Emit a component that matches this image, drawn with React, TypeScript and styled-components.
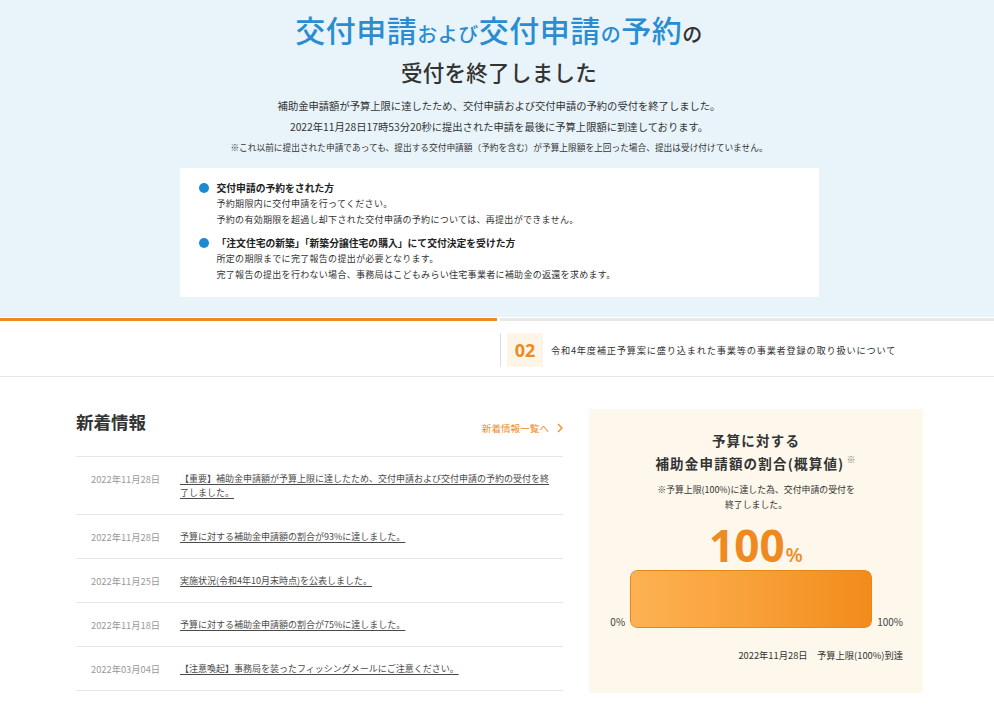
import React from "react";
import styled, { createGlobalStyle } from "styled-components";

const GlobalStyle = createGlobalStyle`
  html, body {
    margin: 0;
    padding: 0;
    background: #fff;
    font-family: "Noto Sans CJK JP", "Noto Sans", sans-serif;
    color: #333;
  }
`;

const ORANGE = "#ee8a1f";
const BLUE = "#2a8dd2";
const LINE = "#e6e6e6";

/* ---------- hero ---------- */

const Hero = styled.section`
  background: #e8f4f9;
  padding: 9px 0 20px 4px;
  display: flex;
  flex-direction: column;
  align-items: center;
`;

const HeroTitle = styled.h1`
  margin: 0;
  font-size: 30px;
  line-height: 40px;
  font-weight: 500;
  color: ${BLUE};
  letter-spacing: 0.5px;
`;

const Small = styled.span<{ $dark?: boolean }>`
  font-size: 20px;
  color: ${({ $dark }) => ($dark ? "#333" : BLUE)};
`;

const HeroSub = styled.h2`
  margin: 2px 0 0;
  font-size: 21.5px;
  line-height: 31px;
  font-weight: 500;
  color: #333;
  letter-spacing: 0.3px;
`;

const HeroText = styled.p<{ $note?: boolean }>`
  margin: 0;
  font-size: ${({ $note }) => ($note ? "8.7px" : "10.3px")};
  line-height: ${({ $note }) => ($note ? "22px" : "21px")};
  color: #333;
  text-align: center;
`;

const HeroLead = styled.div`
  margin-top: 8px;
  display: flex;
  flex-direction: column;
  align-items: center;
`;

const NoticeBox = styled.div`
  margin-top: 9px;
  width: 639px;
  box-sizing: border-box;
  background: #fff;
  padding: 12px 20px 14px 19px;
  display: flex;
  flex-direction: column;
  gap: 7px;
`;

const NoticeItem = styled.div`
  display: grid;
  grid-template-columns: 10px 1fr;
  column-gap: 8px;
`;

const Dot = styled.span`
  width: 10px;
  height: 10px;
  border-radius: 50%;
  background: #1b8ad3;
  margin-top: 3px;
`;

const NoticeHead = styled.div`
  font-size: 9.8px;
  font-weight: 700;
  line-height: 16px;
  color: #222;
`;

const NoticeLine = styled.div`
  font-size: 9px;
  line-height: 16px;
  letter-spacing: 0.3px;
  color: #333;
`;

/* ---------- tabs ---------- */

const TabStrip = styled.nav`
  display: grid;
  grid-template-columns: 497px 1fr;
  column-gap: 3px;
  border-bottom: 1px solid ${LINE};
  padding-top: 1px;
`;

const Tab = styled.div<{ $active?: boolean }>`
  border-top: 3px solid ${({ $active }) => ($active ? ORANGE : "#e8e8e8")};
  height: 52px;
  display: flex;
  align-items: center;
  padding-top: 3px;
`;

const TabInner = styled.div`
  display: flex;
  align-items: center;
  border-left: 1px solid #dedede;
  height: 34px;
  padding-left: 6px;
  gap: 8px;
`;

const TabNum = styled.span`
  width: 36px;
  height: 34px;
  background: #fdf5e6;
  color: ${ORANGE};
  font-family: "Open Sans", "Noto Sans", sans-serif;
  font-weight: 700;
  font-size: 18px;
  display: flex;
  align-items: center;
  justify-content: center;
`;

const TabLabel = styled.span`
  font-size: 9.2px;
  color: #333;
  letter-spacing: 0.8px;
`;

/* ---------- main ---------- */

const Main = styled.main`
  width: 847px;
  margin: 0 0 0 76px;
  padding-top: 32px;
  display: grid;
  grid-template-columns: 487px 334px;
  column-gap: 26px;
  align-items: start;
`;

const NewsHeader = styled.div`
  display: flex;
  justify-content: space-between;
  align-items: flex-end;
  padding-bottom: 21px;
  border-bottom: 1px solid ${LINE};
`;

const NewsTitle = styled.h2`
  margin: 0;
  font-size: 17.5px;
  line-height: 26px;
  font-weight: 700;
  color: #333;
`;

const MoreLink = styled.a`
  font-size: 9.6px;
  line-height: 14px;
  color: ${ORANGE};
  text-decoration: none;
  display: flex;
  align-items: center;
  gap: 8px;
`;

const NewsList = styled.ul`
  list-style: none;
  margin: 0;
  padding: 0;
`;

const NewsRow = styled.li`
  display: grid;
  grid-template-columns: 89px 1fr;
  padding: 15px 10px 14px 15px;
  border-bottom: 1px solid ${LINE};
  font-size: 9px;
  line-height: 14px;
`;

const NewsDate = styled.span`
  font-size: 9.3px;
  line-height: 14px;
  color: #999;
`;

const NewsLink = styled.a`
  font-size: 9px;
  line-height: 14px;
  color: #4a4a4a;
  text-decoration: underline;
  text-underline-offset: 2px;
`;

/* ---------- budget ---------- */

const Budget = styled.aside`
  background: #fdf7ec;
  padding: 20px 20px 31px;
  display: flex;
  flex-direction: column;
  align-items: center;
`;

const BudgetTitle = styled.h3`
  margin: 0;
  font-size: 13.5px;
  line-height: 23px;
  font-weight: 700;
  letter-spacing: 1.2px;
  color: #333;
  text-align: center;
`;

const Sup = styled.sup`
  font-size: 9px;
  line-height: 0;
  font-weight: 400;
  color: #777;
  vertical-align: 6px;
  margin-left: 2px;
`;

const BudgetNote = styled.p`
  margin: 7px 0 0;
  font-size: 8.9px;
  line-height: 15px;
  color: #333;
  text-align: center;
`;

const Percent = styled.div`
  margin-top: 15px;
  color: ${ORANGE};
  font-family: "Open Sans", "Noto Sans", sans-serif;
  font-weight: 700;
  font-size: 44px;
  line-height: 36px;
  height: 36px;
`;

const PercentUnit = styled.span`
  font-size: 20px;
  font-weight: 600;
  margin-left: 1px;
`;

const BarRow = styled.div`
  margin-top: 7px;
  align-self: stretch;
  display: grid;
  grid-template-columns: 1fr 242px 1fr;
  align-items: end;
`;

const BarEdge = styled.span<{ $right?: boolean }>`
  font-size: 10px;
  line-height: 12px;
  color: #444;
  text-align: ${({ $right }) => ($right ? "left" : "right")};
  padding: ${({ $right }) => ($right ? "0 0 0 5px" : "0 5px 0 0")};
`;

const BarTrack = styled.div`
  height: 58px;
  border-radius: 7px;
  background: #fff;
  overflow: hidden;
`;

const BarFill = styled.div`
  height: 100%;
  box-sizing: border-box;
  border: 1px solid #e8861a;
  border-radius: 7px;
  background: linear-gradient(90deg, #fdb253 0%, #f9a23c 45%, #f28b1b 100%);
`;

const BudgetDate = styled.p`
  margin: 20px 0 0;
  align-self: flex-end;
  font-size: 9.3px;
  line-height: 14px;
  color: #333;
  white-space: pre;
`;

const news = [
  {
    date: "2022年11月28日",
    title:
      "【重要】補助金申請額が予算上限に達したため、交付申請および交付申請の予約の受付を終了しました。",
  },
  { date: "2022年11月28日", title: "予算に対する補助金申請額の割合が93%に達しました。" },
  { date: "2022年11月25日", title: "実施状況(令和4年10月末時点)を公表しました。" },
  { date: "2022年11月18日", title: "予算に対する補助金申請額の割合が75%に達しました。" },
  { date: "2022年03月04日", title: "【注意喚起】事務局を装ったフィッシングメールにご注意ください。" },
];

const notices = [
  {
    head: "交付申請の予約をされた方",
    lines: [
      "予約期限内に交付申請を行ってください。",
      "予約の有効期限を超過し却下された交付申請の予約については、再提出ができません。",
    ],
  },
  {
    head: "「注文住宅の新築」「新築分譲住宅の購入」にて交付決定を受けた方",
    lines: [
      "所定の期限までに完了報告の提出が必要となります。",
      "完了報告の提出を行わない場合、事務局はこどもみらい住宅事業者に補助金の返還を求めます。",
    ],
  },
];

export default function App() {
  const ratio = 100;
  return (
    <>
      <GlobalStyle />
      <Hero>
        <HeroTitle>
          交付申請<Small>および</Small>交付申請<Small>の</Small>予約
          <Small $dark>の</Small>
        </HeroTitle>
        <HeroSub>受付を終了しました</HeroSub>
        <HeroLead>
          <HeroText>
            補助金申請額が予算上限に達したため、交付申請および交付申請の予約の受付を終了しました。
          </HeroText>
          <HeroText>
            2022年11月28日17時53分20秒に提出された申請を最後に予算上限額に到達しております。
          </HeroText>
          <HeroText $note>
            ※これ以前に提出された申請であっても、提出する交付申請額（予約を含む）が予算上限額を上回った場合、提出は受け付けていません。
          </HeroText>
        </HeroLead>
        <NoticeBox>
          {notices.map((n) => (
            <NoticeItem key={n.head}>
              <Dot />
              <div>
                <NoticeHead>{n.head}</NoticeHead>
                {n.lines.map((l) => (
                  <NoticeLine key={l}>{l}</NoticeLine>
                ))}
              </div>
            </NoticeItem>
          ))}
        </NoticeBox>
      </Hero>

      <TabStrip>
        <Tab $active />
        <Tab>
          <TabInner>
            <TabNum>02</TabNum>
            <TabLabel>令和4年度補正予算案に盛り込まれた事業等の事業者登録の取り扱いについて</TabLabel>
          </TabInner>
        </Tab>
      </TabStrip>

      <Main>
        <div>
          <NewsHeader>
            <NewsTitle>新着情報</NewsTitle>
            <MoreLink href="#">
              新着情報一覧へ
              <svg width="6" height="10" viewBox="0 0 6 10" fill="none">
                <path d="M1 1l4 4-4 4" stroke={ORANGE} strokeWidth="1.3" />
              </svg>
            </MoreLink>
          </NewsHeader>
          <NewsList>
            {news.map((n) => (
              <NewsRow key={n.title}>
                <NewsDate>{n.date}</NewsDate>
                <div>
                  <NewsLink href="#">{n.title}</NewsLink>
                </div>
              </NewsRow>
            ))}
          </NewsList>
        </div>

        <Budget>
          <BudgetTitle>
            予算に対する
            <br />
            補助金申請額の割合(概算値)
            <Sup>※</Sup>
          </BudgetTitle>
          <BudgetNote>
            ※予算上限(100%)に達した為、交付申請の受付を
            <br />
            終了しました。
          </BudgetNote>
          <Percent>
            {ratio}
            <PercentUnit>%</PercentUnit>
          </Percent>
          <BarRow>
            <BarEdge>0%</BarEdge>
            <BarTrack>
              <BarFill style={{ width: `${ratio}%` }} />
            </BarTrack>
            <BarEdge $right>100%</BarEdge>
          </BarRow>
          <BudgetDate>2022年11月28日　予算上限(100%)到達</BudgetDate>
        </Budget>
      </Main>
    </>
  );
}
